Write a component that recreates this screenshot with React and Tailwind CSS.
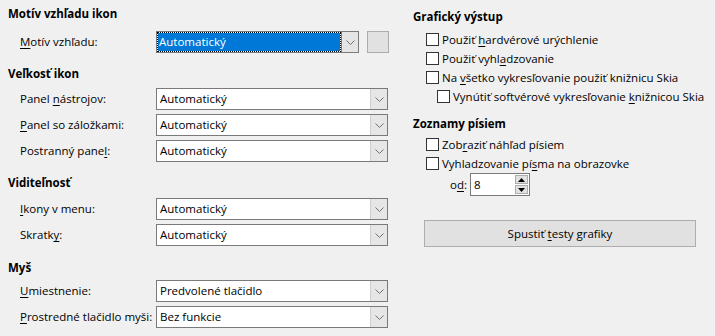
import React from 'react';

const font = { fontFamily: '"Open Sans", "Noto Sans", "Liberation Sans", sans-serif' };

// underlined mnemonic letter
const U = ({ children }) => <span className="underline underline-offset-2">{children}</span>;

const Chevron = () => (
  <svg width="9" height="5" viewBox="0 0 9 5" className="block">
    <path d="M0.5 0.5 L4.5 4.5 L8.5 0.5" fill="none" stroke="#707070" strokeWidth="1" />
  </svg>
);

const Combo = ({ value, focused, narrow }) => (
  <div className={`flex h-[22px] border border-[#7a7a7a] bg-white ${narrow ? 'w-[203px]' : 'w-[232px]'}`}>
    <div className="flex-1 flex items-center p-[1px] min-w-0">
      {focused ? (
        <div className="flex-1 h-full flex items-center bg-[#0078d7] text-white pl-[1px] outline-1 outline-dotted outline-black">
          {value}
        </div>
      ) : (
        <span className="pl-[2px] text-black">{value}</span>
      )}
    </div>
    <div className={`w-[17px] flex items-center justify-center border-l ${focused ? 'bg-[#e5e5e5] border-[#7a7a7a]' : 'bg-[#e6e6e6] border-[#cfcfcf]'}`}>
      <Chevron />
    </div>
  </div>
);

const Row = ({ label, value, focused, narrow, extra }) => (
  <div className="flex items-center h-[22px]">
    <div className="ml-[12px] w-[136px] whitespace-nowrap">{label}</div>
    <Combo value={value} focused={focused} narrow={narrow} />
    {extra}
  </div>
);

const Heading = ({ children, className = '' }) => (
  <div className={`font-bold leading-[16px] h-4 whitespace-nowrap ${className}`}>{children}</div>
);

const Check = ({ children, indent }) => (
  <div className={`flex items-center h-[19px] whitespace-nowrap ${indent ? 'ml-[24px]' : 'ml-[13px]'}`}>
    <div className="w-[13px] h-[13px] border border-[#333333] bg-white shrink-0" />
    <span className="ml-[3px]">{children}</span>
  </div>
);

const App = () => {
  return (
    <div style={font} className="w-[715px] h-[336px] bg-[#f0f0f0] text-[11.5px] text-black flex overflow-hidden">
      {/* left column */}
      <div className="w-[400px] pl-[8px] pt-[6px] flex flex-col">
        <Heading>Motív vzhľadu ikon</Heading>
        <div className="mt-[9px]">
          <Row
            label={<><U>M</U>otív vzhľadu:</>}
            value="Automatický"
            focused
            narrow
            extra={<div className="ml-[8px] w-[22px] h-[22px] bg-[#e1e1e1] border border-[#adadad]" />}
          />
        </div>

        <Heading className="mt-[13px]">Veľkosť ikon</Heading>
        <div className="mt-[6px] flex flex-col gap-[4px]">
          <Row label={<>Panel <U>n</U>ástrojov:</>} value="Automatický" />
          <Row label={<><U>P</U>anel so záložkami:</>} value="Automatický" />
          <Row label={<>Postranný pane<U>l</U>:</>} value="Automatický" />
        </div>

        <Heading className="mt-[13px]">Viditeľnosť</Heading>
        <div className="mt-[7px] flex flex-col gap-[4px]">
          <Row label={<><U>I</U>kony v menu:</>} value="Automatický" />
          <Row label={<>Skratk<U>y</U>:</>} value="Automatický" />
        </div>

        <Heading className="mt-[14px]">Myš</Heading>
        <div className="mt-[4px] flex flex-col gap-[4px]">
          <Row label={<><U>U</U>miestnenie:</>} value="Predvolené tlačidlo" />
          <Row label={<><U>P</U>rostredné tlačidlo myši:</>} value="Bez funkcie" />
        </div>
      </div>

      {/* right column */}
      <div className="flex-1 pl-[13px] pt-[9px] flex flex-col">
        <Heading>Grafický výstup</Heading>
        <div className="mt-[5px] flex flex-col">
          <Check>Použiť <U>h</U>ardvérové urýchlenie</Check>
          <Check>Použiť vyhl<U>a</U>dzovanie</Check>
          <Check>Na <U>v</U>šetko vykresľovanie použiť knižnicu Skia</Check>
          <Check indent>Vynútiť softvérové vykresľovanie <U>k</U>nižnicou Skia</Check>
        </div>

        <Heading className="mt-[10px]">Zoznamy písiem</Heading>
        <div className="mt-[3px] flex flex-col">
          <Check>Zob<U>r</U>aziť náhľad písiem</Check>
          <Check>Vyhladzovanie pí<U>s</U>ma na obrazovke</Check>
        </div>
        <div className="flex items-center h-[23px] ml-[37px]">
          <span className="mr-[3px] whitespace-nowrap">o<U>d</U>:</span>
          <div className="flex h-[23px] w-[60px] border border-[#7a7a7a] bg-white">
            <span className="flex-1 pl-[3px] flex items-center">8</span>
            <div className="w-[14px] flex flex-col gap-[1px] py-[1px] pr-[1px]">
              <div className="flex-1 bg-[#e1e1e1] border border-[#adadad] flex items-center justify-center">
                <svg width="7" height="4" viewBox="0 0 7 4"><path d="M3.5 0 L7 4 L0 4 Z" fill="#000" /></svg>
              </div>
              <div className="flex-1 bg-[#e1e1e1] border border-[#adadad] flex items-center justify-center">
                <svg width="7" height="4" viewBox="0 0 7 4"><path d="M0 0 L7 0 L3.5 4 Z" fill="#000" /></svg>
              </div>
            </div>
          </div>
        </div>

        <button className="mt-[24px] ml-[11px] w-[272px] h-[27px] bg-[#e1e1e1] border border-[#adadad] text-black">
          Spustiť <U>t</U>esty grafiky
        </button>
      </div>
    </div>
  );
};

export default App;
